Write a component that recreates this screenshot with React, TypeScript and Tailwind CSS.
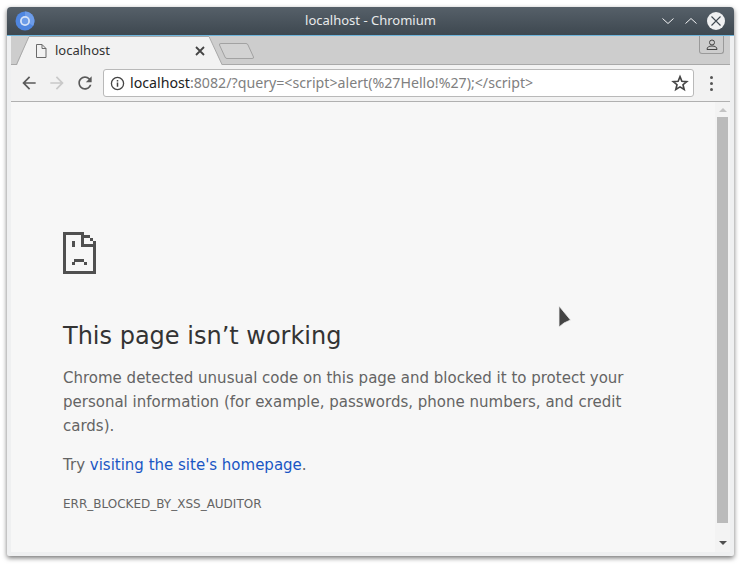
import React from 'react';

const FONT = "font-['DejaVu_Sans',sans-serif]";
const UI_FONT = "font-['Noto_Sans',sans-serif]";

const ChromiumLogo = () => (
  <svg width="20" height="20" viewBox="0 0 20 20">
    <circle cx="10" cy="10" r="9.5" fill="#4f86e0" />
    <path d="M10 .5a9.5 9.5 0 0 1 8.2 14.2L10 10z" fill="#6d9ce8" />
    <circle cx="10" cy="10" r="5" fill="#d5e2f7" />
    <circle cx="10" cy="10" r="3.2" fill="#6d9ce8" />
  </svg>
);

const SadTab = () => (
  <svg width="33" height="42" viewBox="0 0 11 14" shapeRendering="crispEdges" fill="#505050" className="block">
    <rect x="0" y="0" width="7" height="1" />
    <rect x="0" y="0" width="1" height="14" />
    <rect x="0" y="13" width="11" height="1" />
    <rect x="10" y="3" width="1" height="11" />
    <rect x="7" y="1" width="1" height="1" />
    <rect x="8" y="1" width="1" height="1" />
    <rect x="9" y="2" width="1" height="1" />
    <rect x="6" y="0" width="1" height="5" />
    <rect x="6" y="4" width="5" height="1" />
    <rect x="3" y="3" width="1" height="2" />
    <rect x="3.67" y="9" width="3.3" height="1" />
    <rect x="3" y="10" width="1" height="1" />
    <rect x="7" y="10" width="1" height="1" />
  </svg>
);

export default function App() {
  return (
    <div className={`w-[747px] h-[569px] bg-white pt-[7px] pl-[7px] overflow-hidden ${FONT}`}>
      <div className="w-[727px] h-[549px] flex flex-col rounded-t-[4px] rounded-b-[2px] bg-[#eff0f1] shadow-[0_2px_5px_rgba(0,0,0,0.55)] relative">
        {/* KDE title bar */}
        <div className="h-[28px] shrink-0 flex items-center justify-between rounded-t-[4px] bg-gradient-to-b from-[#566069] to-[#3e4850] pl-[8px] pr-[9px] relative">
          <ChromiumLogo />
          <span className={`absolute left-0 right-0 text-center text-[13px] text-[#e8eaeb] ${UI_FONT}`}>localhost - Chromium</span>
          <div className="flex items-center relative">
            <svg width="12" height="8" viewBox="0 0 12 8" fill="none" stroke="#f2f3f4" strokeWidth="1"><path d="M.5 1.500 6 6.500 11.500 1.500" /></svg>
            <svg width="12" height="8" viewBox="0 0 12 8" fill="none" stroke="#f2f3f4" strokeWidth="1" className="ml-[11px]"><path d="M.5 6.500 6 1.500 11.500 6.500" /></svg>
            <svg width="18" height="18" viewBox="0 0 18 18" className="ml-[10px]">
              <circle cx="9" cy="9" r="9" fill="#eff0f1" />
              <path d="M4.5 4.5 13.5 13.5M13.5 4.5 4.5 13.5" stroke="#3e4850" strokeWidth="1.1" />
            </svg>
          </div>
        </div>
        <div className="h-px shrink-0 bg-[#6eb5dc]" />

        <div className="flex-1 flex flex-col px-[4px] min-h-0">
          {/* tab strip */}
          <div className="h-[29px] shrink-0 bg-[#cdcdcd] border-b border-[#a9a9a9] relative">
            <svg width="260" height="29" viewBox="0 0 260 29" className="absolute left-0 top-0">
              <path d="M6 29 18 0 198 0 211 29z" fill="#f2f2f2" />
              <path d="M5.5 28.5 18 .5 198 .5 211 28.5" fill="none" stroke="#a8a8a8" />
              <path d="M210 2.5h25q1.5 0 2 1.5l5.500 12q.5 1.500-1.500 1.500h-25q-1.500 0-2-1.500l-5.500-12q-.5-1.500 1.500-1.500z" transform="translate(0 5)" fill="#d2d2d2" stroke="#a2a2a2" />
            </svg>
            <div className="absolute left-[24px] top-[1px] w-[170px] h-[28px] flex items-center">
              <svg width="12" height="14" viewBox="0 0 12 14" fill="none" stroke="#6a6a6a">
                <path d="M1.500.5h5.500l4 4v9h-9.500zM7 .5v4h4" />
              </svg>
              <span className={`ml-[8px] text-[13px] text-[#333] ${UI_FONT}`}>localhost</span>
              <svg width="10" height="10" viewBox="0 0 10 10" stroke="#444" strokeWidth="1.800" className="ml-auto">
                <path d="M1 1 9 9M9 1 1 9" />
              </svg>
            </div>
            <div className="absolute right-[6px] top-0 w-[25px] h-[18px] rounded-b-[3px] border border-t-0 border-[#9a9a9a] flex items-center justify-center">
              <svg width="12" height="12" viewBox="0 0 12 12" fill="none" stroke="#444">
                <circle cx="6" cy="3.500" r="2.500" />
                <path d="M1 10.500c0-2.500 2-3.500 5-3.500s5 1 5 3.500z" />
              </svg>
            </div>
          </div>

          {/* toolbar */}
          <div className="h-[37px] shrink-0 flex items-center border-b border-[#b0b0b0] bg-[#f2f2f2] relative">
            <svg width="20" height="20" viewBox="0 0 24 24" fill="#5a5a5a" className="ml-[8px]">
              <path d="M20 11H7.830l5.590-5.590L12 4l-8 8 8 8 1.410-1.410L7.830 13H20v-2z" />
            </svg>
            <svg width="20" height="20" viewBox="0 0 24 24" fill="#c9c9c9" className="ml-[8px]">
              <path d="M12 4l-1.410 1.410L16.170 11H4v2h12.170l-5.580 5.590L12 20l8-8z" />
            </svg>
            <svg width="20" height="20" viewBox="0 0 24 24" fill="#5a5a5a" className="ml-[8px]">
              <path d="M17.650 6.350C16.200 4.900 14.210 4 12 4c-4.420 0-7.990 3.580-7.990 8s3.570 8 7.990 8c3.730 0 6.840-2.550 7.730-6h-2.080c-.82 2.330-3.040 4-5.650 4-3.310 0-6-2.690-6-6s2.690-6 6-6c1.660 0 3.140.69 4.220 1.780L13 11h7V4l-2.350 2.350z" />
            </svg>
            <div className="ml-[8px] w-[591px] h-[28px] rounded-[3px] bg-white border border-[#b9b9b9] flex items-center">
              <svg width="15" height="15" viewBox="0 0 16 16" fill="none" stroke="#444" className="ml-[6px] shrink-0">
                <circle cx="8" cy="8" r="6.500" strokeWidth="1.400" />
                <path d="M8 7v4.500M8 4.300v1.500" strokeWidth="1.600" />
              </svg>
              <span className={`ml-[5px] text-[14.2px] whitespace-nowrap text-[#808080] ${UI_FONT}`}><span className="text-[#222]">localhost</span>:8082/?query=&lt;script&gt;alert(%27Hello!%27);&lt;/script&gt;</span>
              <svg width="18" height="18" viewBox="0 0 24 24" fill="none" stroke="#444" strokeWidth="2.200" className="ml-auto mr-[4px] shrink-0">
                <path d="M12 3.500 14.500 9.600 21 10.100 16 14.300 17.600 20.700 12 17.200 6.400 20.700 8 14.300 3 10.100 9.500 9.600z" />
              </svg>
            </div>
            <div className="ml-[16px] flex flex-col gap-[3px]">
              <div className="w-[3px] h-[3px] rounded-full bg-[#555]" />
              <div className="w-[3px] h-[3px] rounded-full bg-[#555]" />
              <div className="w-[3px] h-[3px] rounded-full bg-[#555]" />
            </div>
          </div>

          {/* page + scrollbar */}
          <div className="flex-1 flex min-h-0 mb-[4px]">
            <div className="flex-1 bg-[#f7f7f7] pl-[52px] pt-[130px] text-[#646464]">
              <SadTab />
              <h1 className="mt-[47px] text-[24px] leading-[30px] text-[#333] font-normal">This page isn’t working</h1>
              <p className="mt-[15px] w-[600px] text-[15px] leading-[24px]">
                Chrome detected unusual code on this page and blocked it to protect your personal information (for example, passwords, phone numbers, and credit cards).
              </p>
              <p className="mt-[15px] text-[15px] leading-[24px]">
                Try <span className="text-[#1a56c4]">visiting the site's homepage</span>.
              </p>
              <p className="mt-[19px] text-[12px] leading-[16px]">ERR_BLOCKED_BY_XSS_AUDITOR</p>
            </div>
            <div className="w-[15px] shrink-0 bg-[#f3f3f3] flex flex-col items-center">
              <div className="h-[15px] flex items-center justify-center">
                <div className="w-0 h-0 border-x-[4px] border-x-transparent border-b-[4px] border-b-[#c3c3c3]" />
              </div>
              <div className="w-[11px] flex-1 bg-[#bbbbbb]" />
              <div className="h-[29px] flex items-end justify-center pb-[7px]">
                <div className="w-0 h-0 border-x-[4px] border-x-transparent border-t-[4px] border-t-[#505050]" />
              </div>
            </div>
          </div>
        </div>

        {/* mouse pointer */}
        <svg width="14" height="24" viewBox="0 0 14 24" className="absolute left-[551px] top-[298px]">
          <path d="M1 1V22L6 18 12.500 15z" fill="#444" stroke="#eee" strokeWidth="0.800" />
        </svg>
      </div>
    </div>
  );
}
